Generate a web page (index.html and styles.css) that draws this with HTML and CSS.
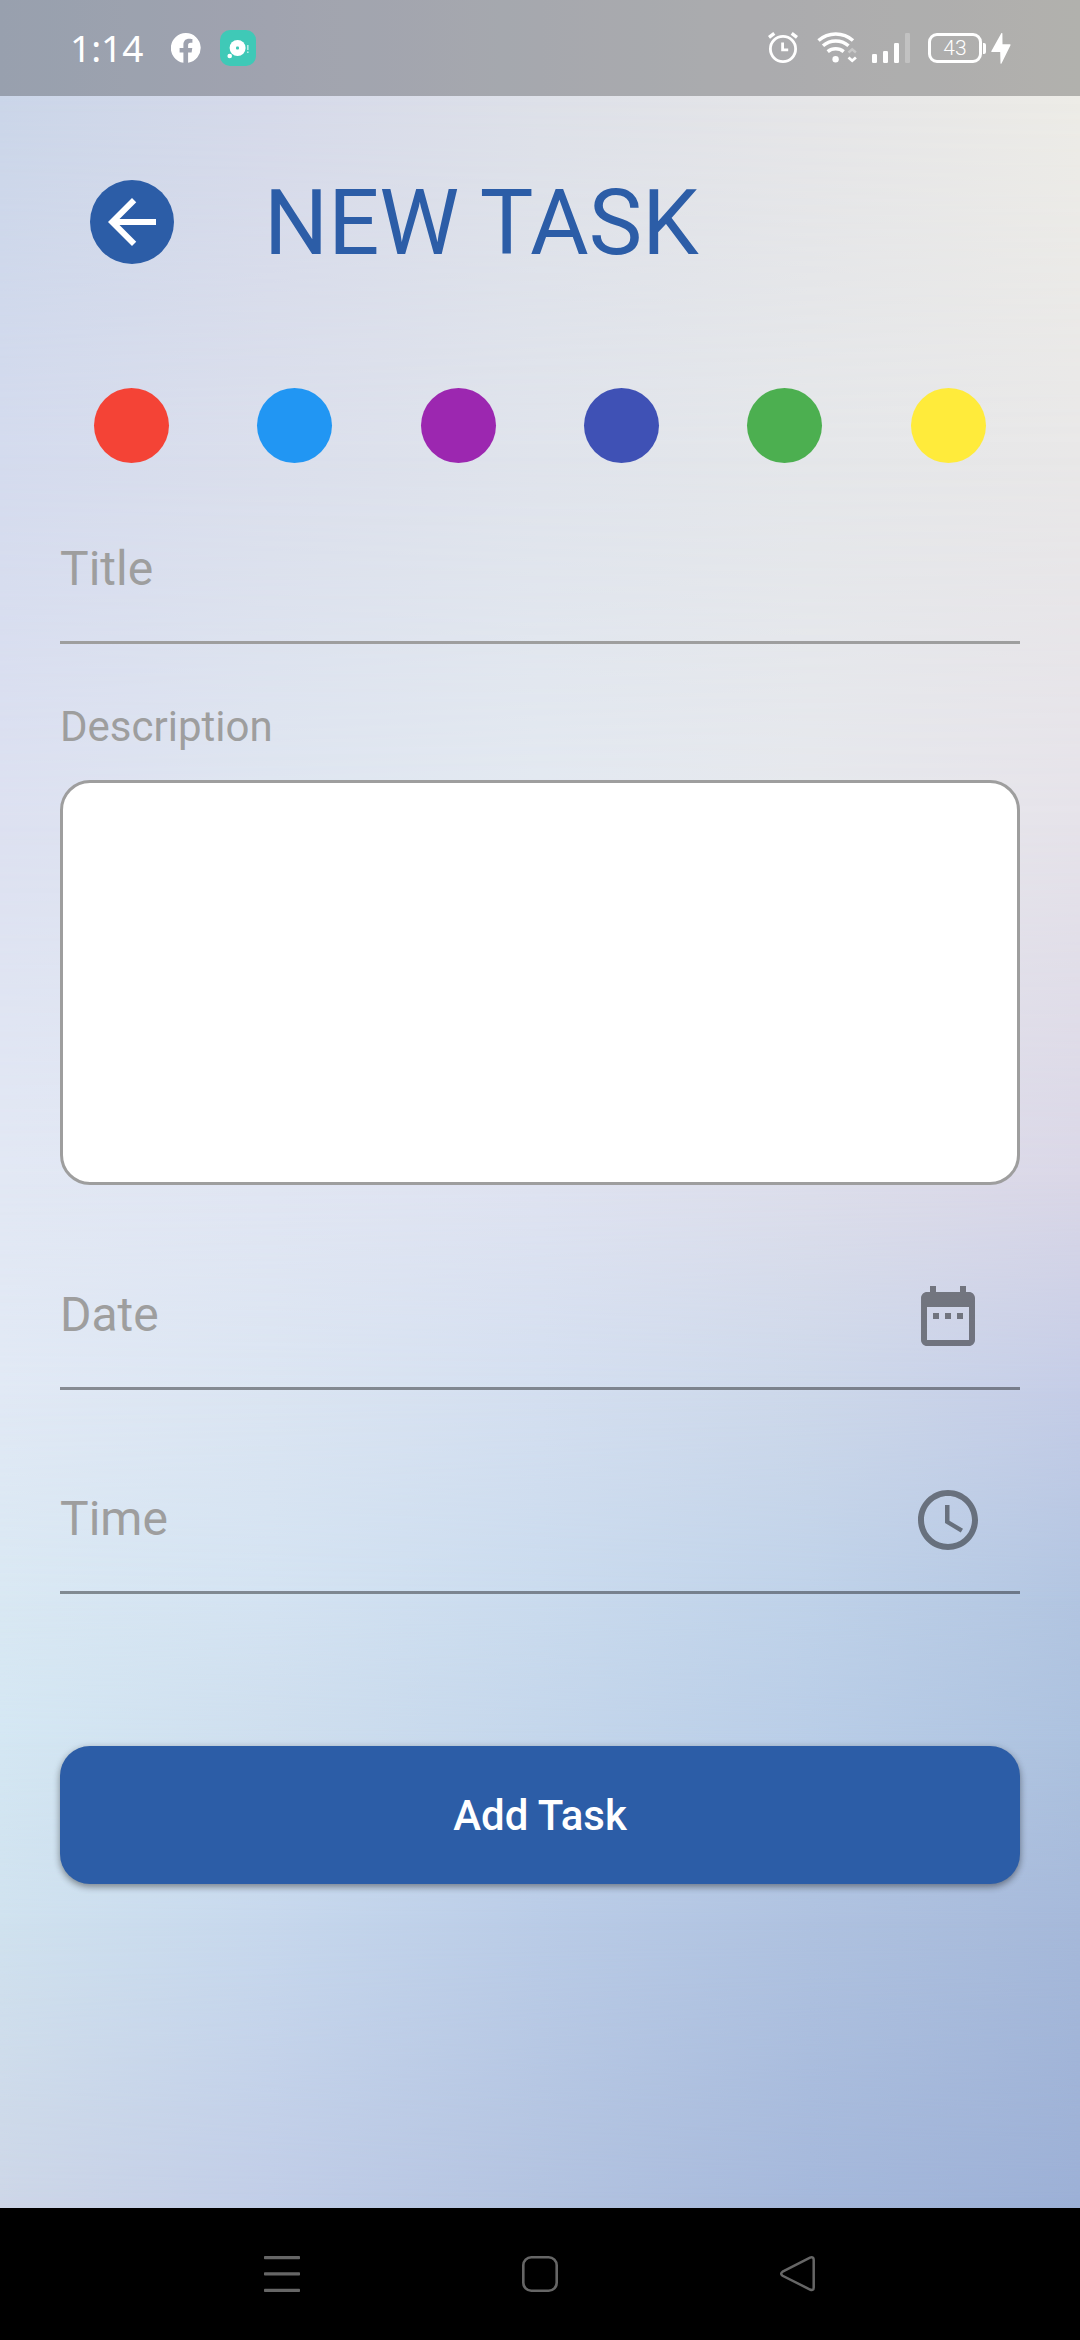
FILE: index.html
```html
<!DOCTYPE html>
<html lang="en">
<head>
<meta charset="utf-8">
<title>New Task</title>
<link rel="stylesheet" href="styles.css">
</head>
<body>
<div class="screen">
  <div class="wallpaper">
    <div class="band band-1"></div>
    <div class="band band-2"></div>
    <div class="band band-3"></div>
    <div class="band band-4"></div>
    <div class="band band-5"></div>
    <div class="band band-6"></div>
    <div class="band band-7"></div>
    <div class="band band-8"></div>
    <div class="band band-9"></div>
  </div>

  <header class="status">
    <span class="clock">1:14</span>
    <svg class="st-fb" width="30" height="30" viewBox="0 0 30 30"><path fill="#fff" d="M15 0a15 15 0 0 0-2.6 29.8V19.4H8.6V15h3.8v-3.2c0-3.9 2.3-6 5.8-6 1.6 0 3.2.3 3.2.3v3.7h-1.8c-1.9 0-2.5 1.1-2.5 2.3V15h4.2l-.7 4.4h-3.5v10.4A15 15 0 0 0 15 0z"/></svg>
    <svg class="st-app" width="36" height="36" viewBox="0 0 36 36"><rect width="36" height="36" rx="10" fill="#3fc9b7"/><circle cx="17.6" cy="18" r="8" fill="#fff"/><rect x="16" y="16.5" width="3" height="3" rx="1" fill="#3fc9b7"/><circle cx="9.7" cy="26" r="2.3" fill="#fff"/><path d="M27.8 15v5M27.8 21.5v1.5" stroke="#b9ebe4" stroke-width="1.6"/></svg>
    <span class="spacer"></span>
    <svg class="st-alarm" width="30" height="32" viewBox="0 0 30 32" fill="none" stroke="#fff"><circle cx="15" cy="17" r="12.6" stroke-width="2.8"/><path d="M14.6 10.5v7.3h5.6" stroke-width="2.8"/><path d="M1 5.4L6.3 1.4M29 5.4L23.700 1.4" stroke-width="3.4"/></svg>
    <svg class="st-wifi" width="40" height="32" viewBox="0 0 40 32" fill="none" stroke="#fff" stroke-width="3.5"><path d="M1.500 8.500a26 26 0 0 1 34.500 0"/><path d="M6 13.800a19.500 19.500 0 0 1 25.500 0"/><path d="M10.700 19.700a12.500 12.500 0 0 1 16 0"/><circle cx="18.600" cy="27.300" r="3.200" fill="#fff" stroke="none"/><path d="M31.500 20.500l3.700-3.200 3.700 3.200" stroke="#c8c8c8" stroke-width="2.400"/><path d="M31.500 25.500l3.700 3.200 3.700-3.200" stroke-width="2.800"/></svg>
    <svg class="st-signal" width="39" height="30" viewBox="0 0 39 30" fill="#fff"><rect y="21" width="5" height="9" rx="1.200"/><rect x="11" y="18" width="5" height="12" rx="1.200"/><rect x="22" y="10" width="5" height="20" rx="1.200"/><rect x="33" width="5" height="30" rx="1.200" opacity=".25"/></svg>
    <span class="battery">43</span>
    <span class="battery-tip"></span>
    <svg class="st-bolt" width="20" height="31" viewBox="0 0 20 31"><path fill="#fff" d="M10.300.3L.4 18c-.3.600 0 1 .6 1h8.200l.3 11.300c0 .7.700.7 1 .2l9-18.200c.3-.7 0-1.100-.6-1.100h-7.400L11.400.5c0-.6-.8-.7-1.100-.2z"/></svg>
  </header>

  <main class="page">
    <div class="heading">
      <button class="back" aria-label="Back"><svg width="72" height="72" viewBox="0 0 24 24"><path fill="#fff" d="M20 11H7.830l5.590-5.590L12 4l-8 8 8 8 1.410-1.410L7.830 13H20v-2z"/></svg></button>
      <h1 class="title">NEW TASK</h1>
    </div>

    <div class="colors">
      <span class="dot red"></span><span class="dot blue"></span><span class="dot purple"></span><span class="dot indigo"></span><span class="dot green"></span><span class="dot yellow"></span>
    </div>

    <div class="field field-title"><span>Title</span></div>
    <label class="desc-label">Description</label>
    <div class="desc-box"></div>
    <div class="field field-date"><span>Date</span>
      <svg class="field-icon" width="72" height="72" viewBox="0 0 24 24"><path d="M9 11H7v2h2v-2zm4 0h-2v2h2v-2zm4 0h-2v2h2v-2zm2-7h-1V2h-2v2H8V2H6v2H5c-1.110 0-1.990.9-1.990 2L3 20c0 1.100.89 2 2 2h14c1.100 0 2-.9 2-2V6c0-1.100-.9-2-2-2zm0 16H5V9h14v11z"/></svg>
    </div>
    <div class="field field-time"><span>Time</span>
      <svg class="field-icon" width="72" height="72" viewBox="0 0 24 24"><path d="M11.990 2C6.470 2 2 6.480 2 12s4.470 10 9.990 10C17.520 22 22 17.520 22 12S17.520 2 11.990 2zM12 20c-4.420 0-8-3.580-8-8s3.580-8 8-8 8 3.580 8 8-3.580 8-8 8zm.5-13H11v6l5.250 3.150.75-1.230-4.500-2.670z"/></svg>
    </div>
    <button class="add">Add Task</button>
  </main>

  <nav class="navbar">
    <svg width="36" height="36" viewBox="0 0 36 36" fill="#666"><rect width="36" height="3.300" rx=".8"/><rect y="16.300" width="36" height="3.300" rx=".8"/><rect y="32.700" width="36" height="3.300" rx=".8"/></svg>
    <svg width="36" height="36" viewBox="0 0 36 36"><rect x="1.300" y="1.300" width="33.400" height="33.400" rx="8" fill="none" stroke="#666" stroke-width="2.600"/></svg>
    <svg width="36" height="36" viewBox="0 0 36 36"><path d="M2.600 15.700L30 1.700Q33.700.3 33.700 4V31.500Q33.700 35 30 33.500L2.600 19.800Q-.2 17.700 2.600 15.700Z" fill="none" stroke="#666" stroke-width="2.500"/></svg>
  </nav>
</div>
</body>
</html>
```
FILE: styles.css
```css
* { box-sizing: border-box; }
body { margin: 0; font-family: Roboto, sans-serif; }
button { border: 0; padding: 0; font-family: inherit; }
svg { display: block; flex: none; }

.screen {
  position: relative;
  display: flex;
  flex-direction: column;
  width: 1080px;
  height: 2340px;
  overflow: hidden;
  isolation: isolate;
}

/* Each band fades in over the one before it, giving a soft two-way gradient. */
.wallpaper { position: absolute; inset: 0 0 132px; z-index: -1; }
.band {
  position: absolute;
  inset: 0;
  -webkit-mask-image: linear-gradient(transparent var(--from), #000 var(--to));
  mask-image: linear-gradient(transparent var(--from), #000 var(--to));
}
.band-1 { --from: -1px; --to: 0px; background: linear-gradient(90deg, #cbd6e9, #d6daea 25%, #dee1e9 50%, #e6e6e8 75%, #edece7); }
.band-2 { --from: 96px; --to: 450px; background: linear-gradient(90deg, #d4dbee, #dbdfec 25%, #e0e4ec 50%, #e5e7ea 75%, #e9e8e8); }
.band-3 { --from: 450px; --to: 820px; background: linear-gradient(90deg, #dde1f1, #dfe6f1 25%, #e3e9f1 50%, #e6e8ed 75%, #e6e3ea); }
.band-4 { --from: 820px; --to: 1180px; background: linear-gradient(90deg, #e2e8f4, #e1e6f3 25%, #dfe3f1 50%, #dddeeb 75%, #dad7e7); }
.band-5 { --from: 1180px; --to: 1390px; background: linear-gradient(90deg, #e1e9f5, #dbe5f2 25%, #d4dff0 50%, #cdd8ea 75%, #c5cde7); }
.band-6 { --from: 1390px; --to: 1600px; background: linear-gradient(90deg, #d9e8f3, #d4e3f2 25%, #cadbee 50%, #bfd2e9 75%, #b2c5e1); }
.band-7 { --from: 1600px; --to: 1740px; background: linear-gradient(90deg, #d4e7f3, #cedeee 25%, #c4d6eb 50%, #b9cde7 75%, #adc2df); }
.band-8 { --from: 1740px; --to: 1920px; background: linear-gradient(90deg, #d0e2ef, #c7d8ed 25%, #bacce7 50%, #afc2e0 75%, #a6b9da); }
.band-9 { --from: 1920px; --to: 2208px; background: linear-gradient(90deg, #cdd6e7, #c1cde7 25%, #b3c3e0 50%, #a5b8db 75%, #9cb0d6); }

.status {
  display: flex;
  align-items: center;
  flex: none;
  height: 96px;
  padding: 0 69px 0 70px;
  background: rgba(0, 0, 0, .25);
  color: #fff;
}
.clock { width: 72px; font: 400 37px/44px "Noto Sans", sans-serif; white-space: nowrap; }
.st-fb { margin-left: 29px; }
.st-app { margin-left: 19px; }
.spacer { flex: 1; }
.st-wifi { margin-left: 19px; }
.st-signal { margin-left: 15px; }
.battery {
  width: 54px;
  height: 30px;
  margin-left: 17px;
  border: 3px solid #fff;
  border-radius: 9px;
  font-size: 21px;
  font-weight: 300;
  line-height: 24px;
  text-align: center;
}
.battery-tip { width: 3px; height: 11px; margin-left: 1px; border-radius: 0 2px 2px 0; background: #fff; }
.st-bolt { margin-left: 5px; }

.page { display: flex; flex-direction: column; flex: 1; padding: 84px 60px 0; }
.heading { display: flex; align-items: center; height: 84px; padding-left: 30px; }
.back {
  display: grid;
  place-items: center;
  width: 84px;
  height: 84px;
  border-radius: 50%;
  background: #2c5da7;
}
.title { margin: 0 0 0 90px; padding-top: 3px; font-size: 90px; font-weight: 400; line-height: 106px; color: #2c5da7; white-space: nowrap; }

.colors { display: grid; grid-template-columns: repeat(6, 1fr); justify-items: center; margin: 124px -10px 0; }
.dot { width: 75px; height: 75px; border-radius: 50%; }
.red { background: #f44336; }
.blue { background: #2196f3; }
.purple { background: #9c27b0; }
.indigo { background: #3f51b5; }
.green { background: #4caf50; }
.yellow { background: #ffeb3b; }

.field {
  display: flex;
  justify-content: space-between;
  align-items: center;
  height: 150px;
  padding: 2px 36px 0 0;
  border-bottom: 3px solid rgba(0, 0, 0, .4);
  font-size: 48px;
  line-height: 56px;
  color: #9e9e9e;
}
.field-title { margin-top: 31px; border-color: #9e9e9e; }
.field-icon { margin-top: 3px; fill: #000; opacity: .45; }
.desc-label { margin-top: 58px; font-size: 42px; line-height: 50px; color: #9e9e9e; }
.desc-box { height: 405px; margin-top: 28px; border: 3px solid #9e9e9e; border-radius: 30px; background: #fff; }
.field-date { margin-top: 55px; }
.field-time { margin-top: 54px; }
.add {
  height: 138px;
  margin-top: 152px;
  border-radius: 30px;
  background: #2c5da7;
  box-shadow: 0 3px 6px rgba(0, 0, 0, .32), 0 2px 10px rgba(0, 0, 0, .12);
  font-size: 42px;
  font-weight: 500;
  color: #fff;
}

.navbar {
  display: flex;
  justify-content: center;
  gap: 222px;
  flex: none;
  height: 132px;
  padding-top: 48px;
  background: #000;
}
```
